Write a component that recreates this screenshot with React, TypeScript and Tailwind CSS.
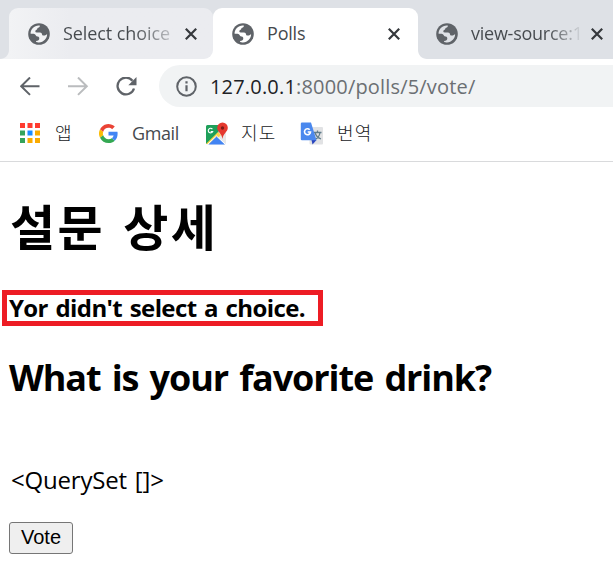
import React from "react";

const sans = "font-['Open_Sans','Noto_Sans_CJK_KR',sans-serif]";

function Globe() {
  return (
    <svg className="size-[22px] shrink-0" viewBox="0 0 22 22">
      <circle cx="11" cy="11" r="10.8" fill="#5f6368" />
      <path
        fill="currentColor"
        d="M11.8 2.5c.3 1.300-.6 2-1.700 2.300-1 .3-.6 1.400-1.500 2-.8.5-1.500.9-1.200 1.900.3.800 1.300.700 2.200.700h2.400c1.200 0 2 .8 2 1.900 0 1 .7 1.200 1.500 1.200h1.300c.8 0 1.300-.9 2.300-1.200.100 4-3.400 8-8.100 8.200-1 .1-2-.1-2.900-.4v-1.200c2.100 0 3.200-.9 3.200-2.400 0-1.400-.9-1.900-2-1.900-1.200 0-1.300-1.600-2.400-2.300-1-.6-2.600-.5-4.300-.5-.3-4.900 4.300-9 9.200-8.300z"
      />
    </svg>
  );
}

function Cross() {
  return (
    <svg className="size-3 shrink-0" viewBox="0 0 12 12" fill="none" stroke="#35383c" strokeWidth="2.2">
      <path d="M.8.8 11.2 11.2M11.2.8.8 11.2" />
    </svg>
  );
}

function Flare({ className }: { className: string }) {
  return (
    <svg className={`absolute bottom-0 size-[9px] ${className}`} viewBox="0 0 9 9" fill="currentColor">
      <path d="M9 0v9H0C5 9 9 5 9 0z" />
    </svg>
  );
}

function AppsIcon() {
  const colors = ["#ff3b30", "#ff3b30", "#ff3b30", "#34a35a", "#1a8cff", "#fbab00", "#34a35a", "#fbab00", "#fbab00"];
  return (
    <svg className="size-5 shrink-0" viewBox="0 0 20 20">
      {colors.map((c, i) => (
        <rect key={i} x={(i % 3) * 7.5} y={Math.floor(i / 3) * 7.5} width="5" height="5" fill={c} />
      ))}
    </svg>
  );
}

function GoogleIcon() {
  return (
    <svg className="size-[19px] shrink-0" viewBox="2 2 44 44">
      <path fill="#fbbc05" d="M11.7 28.2A13 13 0 0 1 11.7 19.8L4.4 14.1a22 22 0 0 0 0 19.8z" />
      <path fill="#ea4335" d="M24 10.8c3.2 0 6.1 1.1 8.4 3.3l6.2-6.2A22 22 0 0 0 4.4 14.1l7.3 5.7C13.4 14.6 18.3 10.8 24 10.8z" />
      <path fill="#34a853" d="M24 46c5.9 0 10.9-2 14.6-5.3l-7.1-5.5c-2 1.3-4.5 2.1-7.5 2.1-5.7 0-10.6-3.9-12.3-9.1l-7.3 5.7A22 22 0 0 0 24 46z" />
      <path fill="#4285f4" d="M45.1 24.5c0-1.6-.1-3.1-.4-4.5H24v8.500h11.800c-.5 2.700-2 5.100-4.300 6.700l7.100 5.500c4.200-3.900 6.500-9.600 6.500-16.200z" />
    </svg>
  );
}

function MapsIcon() {
  return (
    <svg className="h-[23px] w-[23px] shrink-0" viewBox="0 0 23 23">
      <rect x="1" y="3" width="20" height="19.5" rx="1.5" fill="#e8e8e8" />
      <path d="M2.500 3H15l-2 9L1.500 22A2 2 0 0 1 1 20.500v-16A1.500 1.500 0 0 1 2.500 3z" fill="#1fa05a" />
      <path d="M1.200 21.800 13 10l3 3-9 9H2z" fill="#ffd54a" />
      <path d="m3.500 22.500 8-8.500 8.500 8.500z" fill="#4284f3" />
      <path d="m11.500 14 9 8.500M2.500 22.500l9-8.500" stroke="#fff" strokeWidth="1" />
      <path d="M7.400 7.200A2.300 2.300 0 1 0 7.700 9.500H5.700" fill="none" stroke="#fff" strokeWidth="1.1" />
      <path d="M17.500.5a5.300 5.300 0 0 0-5.300 5.300c0 4.200 4.500 5.200 5.300 11.200.8-6 5.300-7 5.300-11.200A5.300 5.300 0 0 0 17.500.5z" fill="#e5392f" />
      <circle cx="17.5" cy="6" r="1.7" fill="#7d1c17" />
    </svg>
  );
}

function TranslateIcon() {
  return (
    <svg className="h-[23px] w-[23px] shrink-0" viewBox="0 0 23 23">
      <rect x="9.5" y="5" width="13.5" height="17.5" rx="1" fill="#e1e2e4" />
      <path d="M13.500 10.500h8M17.500 8.500v2M20 10.500c-.5 3.500-3 6-5 7M15 10.500c.8 3 3.500 5.500 6 6.500" stroke="#607d8b" strokeWidth="1.3" fill="none" />
      <path d="m11.500 18 5 .1-4 4.400z" fill="#2a45bd" />
      <path d="M2 .5h9l5.500 17.800H2A1.200 1.200 0 0 1 .8 17V1.700A1.200 1.200 0 0 1 2 .5z" fill="#4a88ee" />
      <path d="M9.700 7.700A3 3 0 1 0 10.500 10H7.700" fill="none" stroke="#fff" strokeWidth="1.6" />
    </svg>
  );
}

export default function App() {
  return (
    <div className={`h-[562px] w-[613px] overflow-hidden bg-white text-black ${sans}`}>
      <header className="flex h-[59px] bg-[#dee1e6] pt-2 pl-[9px] text-[18px] text-[#45494d]">
        <div className="relative flex w-[204px] shrink-0 items-center rounded-t-[9px] bg-linear-to-r from-[#f2f3f5] to-[#ebecf0] to-30% pl-[19px] text-[#f2f3f5]">
          <div className="absolute right-0 bottom-0 size-[9px] bg-white" />
          <div className="absolute right-0 bottom-0 size-[9px] rounded-br-[9px] bg-[#ebecf0]" />
          <Flare className="-left-[9px]" />
          <Globe />
          <span className="ml-[13px] w-[108px] bg-linear-to-r from-[#45494d] from-65% to-[#45494d44] bg-clip-text tracking-[-0.08px] whitespace-nowrap text-transparent">Select choice</span>
          <span className="ml-[13.5px]"><Cross /></span>
        </div>
        <div className="relative flex w-[205px] shrink-0 items-center rounded-t-[9px] bg-white pl-[19px] text-white">
          <Flare className="-right-[9px] -scale-x-100" />
          <Globe />
          <span className="ml-[13px] w-[108px] tracking-[-0.2px] text-[#45494d]">Polls</span>
          <span className="ml-[13px]"><Cross /></span>
        </div>
        <div className="flex flex-1 items-center pl-[18px] text-[#dee1e6]">
          <Globe />
          <span className="ml-[13px] w-[110px] shrink-0 bg-linear-to-r from-[#45494d] from-70% to-[#45494d11] bg-clip-text tracking-[-0.25px] whitespace-nowrap text-transparent">view-source:1</span>
          <span className="ml-[10px]"><Cross /></span>
        </div>
      </header>
      <nav className="flex h-[55px] items-center pl-[20px]">
        <svg className="h-5 w-[118px] shrink-0" viewBox="0 0 118 20" fill="none" strokeWidth="2">
          <path d="M19.500 9.200H1.500M10 .5 1.200 9.200l8.800 8.700" stroke="#5f6368" />
          <path d="M48 9.200h18M58 .5l8.800 8.700L58 17.900" stroke="#babcbe" />
          <path d="M112.500 3.700A8.400 8.400 0 1 0 114 11.500" stroke="#5f6368" strokeWidth="2.3" />
          <path d="M116.500 0v8.200h-8.200z" fill="#5f6368" />
        </svg>
        <div className="-mt-px ml-[21px] flex h-[42px] flex-1 items-center rounded-l-full bg-[#f1f3f4] pl-[17px]">
          <svg className="size-[21px] shrink-0" viewBox="0 0 21 21" fill="none" stroke="#5f6368" strokeWidth="2">
            <circle cx="10.5" cy="10.5" r="9.3" />
            <path d="M10.500 9.300v6M10.500 5.300v2.200" strokeWidth="2.2" />
          </svg>
          <span className="ml-[13px] pt-px text-[20px] tracking-[0.18px] text-[#6b6f73]"><span className="text-[#202124]">127.0.0.1</span>:8000/polls/5/vote/</span>
        </div>
      </nav>
      <div className="flex h-12 items-center border-b border-[#d9dadc] pb-[9px] pl-5 text-[18px] text-[#45494d]">
        <AppsIcon />
        <span className="ml-[15px] w-[44px] font-light text-[#202124]">앱</span>
        <GoogleIcon />
        <span className="ml-[14px] w-[73px] tracking-[-0.4px]">Gmail</span>
        <MapsIcon />
        <span className="ml-[13px] w-[59px] font-light tracking-[1.2px] text-[#202124]">지도</span>
        <TranslateIcon />
        <span className="ml-[14px] font-light tracking-[1.2px] text-[#202124]">번역</span>
      </div>
      <main>
        <h1 className="mt-[29px] ml-[10px] h-[72px] text-[49px] leading-[72px] font-bold tracking-[2.3px] [word-spacing:3.5px]">설문 상세</h1>
        <div className="mt-[27px] ml-[2px] flex h-[36px] w-[321px] items-center border-[5px] border-[#ed1c24] pb-px pl-[2px] text-[24px] leading-[26px] font-bold tracking-[-0.61px] whitespace-nowrap [word-spacing:2px]">Yor didn't select a choice.</div>
        <h2 className="mt-[27px] ml-[9px] h-[51px] text-[36px] leading-[50px] font-bold tracking-[-1.1px] whitespace-nowrap [word-spacing:3px]">What is your favorite drink?</h2>
        <p className="mt-[60px] ml-[11px] h-[32px] text-[24px] leading-[32px] tracking-[-0.2px] [word-spacing:2px]">&lt;QuerySet []&gt;</p>
        <button className="mt-[26px] ml-[9px] block h-[32px] w-[64px] rounded-[3px] border border-[#767676] bg-[#efefef] pb-0.5 font-['Liberation_Sans',sans-serif] text-[20px] leading-[28px]">Vote</button>
      </main>
    </div>
  );
}
